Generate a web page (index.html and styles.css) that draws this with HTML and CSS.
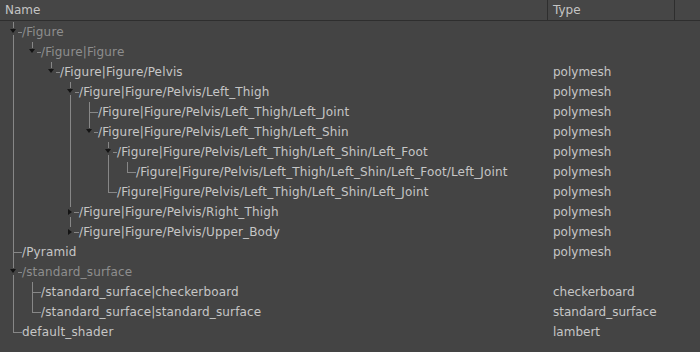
FILE: index.html
```html
<!DOCTYPE html>
<html lang="en">
<head>
    <meta charset="UTF-8">
    <title>Scene Outliner</title>
    <link rel="stylesheet" href="styles.css">
</head>
<body>
    <div class="outliner">
        <!-- Column header -->
        <div class="header">
            <div class="col name">Name</div>
            <div class="col type">Type</div>
            <div class="col rest"></div>
        </div>

        <!-- Tree rows -->
        <div class="tree">
            <div class="row">
                <div class="name"><span class="br pipe dash"><i class="arrow down"></i></span><span class="label dim">/Figure</span></div>
                <div class="type"></div>
            </div>
            <div class="row">
                <div class="name"><span class="br pipe"></span><span class="br elbow"><i class="arrow down"></i></span><span class="label dim">/Figure|Figure</span></div>
                <div class="type"></div>
            </div>
            <div class="row">
                <div class="name"><span class="br pipe"></span><span class="br"></span><span class="br elbow"><i class="arrow down"></i></span><span class="label">/Figure|Figure/Pelvis</span></div>
                <div class="type">polymesh</div>
            </div>
            <div class="row">
                <div class="name"><span class="br pipe"></span><span class="br"></span><span class="br"></span><span class="br tee"><i class="arrow down"></i></span><span class="label">/Figure|Figure/Pelvis/Left_Thigh</span></div>
                <div class="type">polymesh</div>
            </div>
            <div class="row">
                <div class="name"><span class="br pipe"></span><span class="br"></span><span class="br"></span><span class="br pipe"></span><span class="br tee"></span><span class="label">/Figure|Figure/Pelvis/Left_Thigh/Left_Joint</span></div>
                <div class="type">polymesh</div>
            </div>
            <div class="row">
                <div class="name"><span class="br pipe"></span><span class="br"></span><span class="br"></span><span class="br pipe"></span><span class="br elbow"><i class="arrow down"></i></span><span class="label">/Figure|Figure/Pelvis/Left_Thigh/Left_Shin</span></div>
                <div class="type">polymesh</div>
            </div>
            <div class="row">
                <div class="name"><span class="br pipe"></span><span class="br"></span><span class="br"></span><span class="br pipe"></span><span class="br"></span><span class="br tee"><i class="arrow down"></i></span><span class="label">/Figure|Figure/Pelvis/Left_Thigh/Left_Shin/Left_Foot</span></div>
                <div class="type">polymesh</div>
            </div>
            <div class="row">
                <div class="name"><span class="br pipe"></span><span class="br"></span><span class="br"></span><span class="br pipe"></span><span class="br"></span><span class="br pipe"></span><span class="br elbow"></span><span class="label">/Figure|Figure/Pelvis/Left_Thigh/Left_Shin/Left_Foot/Left_Joint</span></div>
                <div class="type">polymesh</div>
            </div>
            <div class="row">
                <div class="name"><span class="br pipe"></span><span class="br"></span><span class="br"></span><span class="br pipe"></span><span class="br"></span><span class="br elbow"></span><span class="label">/Figure|Figure/Pelvis/Left_Thigh/Left_Shin/Left_Joint</span></div>
                <div class="type">polymesh</div>
            </div>
            <div class="row">
                <div class="name"><span class="br pipe"></span><span class="br"></span><span class="br"></span><span class="br tee"><i class="arrow right"></i></span><span class="label">/Figure|Figure/Pelvis/Right_Thigh</span></div>
                <div class="type">polymesh</div>
            </div>
            <div class="row">
                <div class="name"><span class="br pipe"></span><span class="br"></span><span class="br"></span><span class="br elbow"><i class="arrow right"></i></span><span class="label">/Figure|Figure/Pelvis/Upper_Body</span></div>
                <div class="type">polymesh</div>
            </div>
            <div class="row">
                <div class="name"><span class="br tee"></span><span class="label">/Pyramid</span></div>
                <div class="type">polymesh</div>
            </div>
            <div class="row">
                <div class="name"><span class="br tee"><i class="arrow down"></i></span><span class="label dim">/standard_surface</span></div>
                <div class="type"></div>
            </div>
            <div class="row">
                <div class="name"><span class="br pipe"></span><span class="br tee"></span><span class="label">/standard_surface|checkerboard</span></div>
                <div class="type">checkerboard</div>
            </div>
            <div class="row">
                <div class="name"><span class="br pipe"></span><span class="br elbow"></span><span class="label">/standard_surface|standard_surface</span></div>
                <div class="type">standard_surface</div>
            </div>
            <div class="row">
                <div class="name"><span class="br elbow"></span><span class="label">default_shader</span></div>
                <div class="type">lambert</div>
            </div>
        </div>
    </div>
</body>
</html>
```

FILE: styles.css
```css
/* Page */
body {
    margin: 0;
    background-color: #444444;
    font-family: "DejaVu Sans", sans-serif;
    font-size: 12px;
    color: #c6c6c6;
}

.outliner {
    width: 700px;
    height: 352px;
    overflow: hidden;
}

/* Header */
.header {
    display: grid;
    grid-template-columns: 547px 127px 1fr;
    height: 20px;
    background-color: #464646;
    border-bottom: 1px solid #2e2e2e;
}

.header .col {
    padding-left: 5px;
    line-height: 20px;
    color: #c4c4c4;
}

.header .type,
.header .rest {
    border-left: 1px solid #2e2e2e;
}

/* Tree */
.tree {
    padding-top: 1px;
}

.row {
    display: grid;
    grid-template-columns: 553px 1fr;
    height: 20px;
}

.row .name {
    display: flex;
    padding-left: 3px;
    height: 20px;
    white-space: nowrap;
}

.row .type {
    line-height: 20px;
    white-space: nowrap;
}

.label {
    line-height: 20px;
    letter-spacing: 0.15px;
}

.dim {
    color: #8e8e8e;
}

/* Branch lines */
.br {
    position: relative;
    width: 19px;
    height: 20px;
    flex: none;
}

.br.pipe::before,
.br.tee::before,
.br.elbow::before {
    content: "";
    position: absolute;
    left: 10px;
    top: 0;
    width: 1px;
    height: 20px;
    background-color: #878787;
}

.br.elbow::before {
    height: 11px;
}

.br.tee::after,
.br.elbow::after,
.br.dash::after {
    content: "";
    position: absolute;
    left: 11px;
    top: 10px;
    width: 8px;
    height: 1px;
    background-color: #878787;
}

/* Expand arrows */
.arrow {
    position: absolute;
    z-index: 1;
    width: 0;
    height: 0;
}

.arrow::before {
    content: "";
    position: absolute;
    left: -6px;
    top: -5px;
    width: 13px;
    height: 10px;
    background-color: #444444;
}

.arrow::after {
    content: "";
    position: absolute;
    border-style: solid;
    border-color: transparent;
}

.arrow.down {
    left: 10px;
    top: 9px;
}

.arrow.down::before {
    left: -4px;
    top: -3px;
    width: 9px;
    height: 7px;
}

.arrow.down::after {
    left: -3px;
    top: -2px;
    border-width: 4px 3.5px 0 3.5px;
    border-top-color: #141414;
}

.arrow.right {
    left: 10px;
    top: 10px;
}

.arrow.right::before {
    left: -3px;
    top: -5px;
    width: 7px;
    height: 10px;
}

.arrow.right::after {
    left: -2px;
    top: -3.5px;
    border-width: 3.5px 0 3.5px 4px;
    border-left-color: #141414;
}
```
